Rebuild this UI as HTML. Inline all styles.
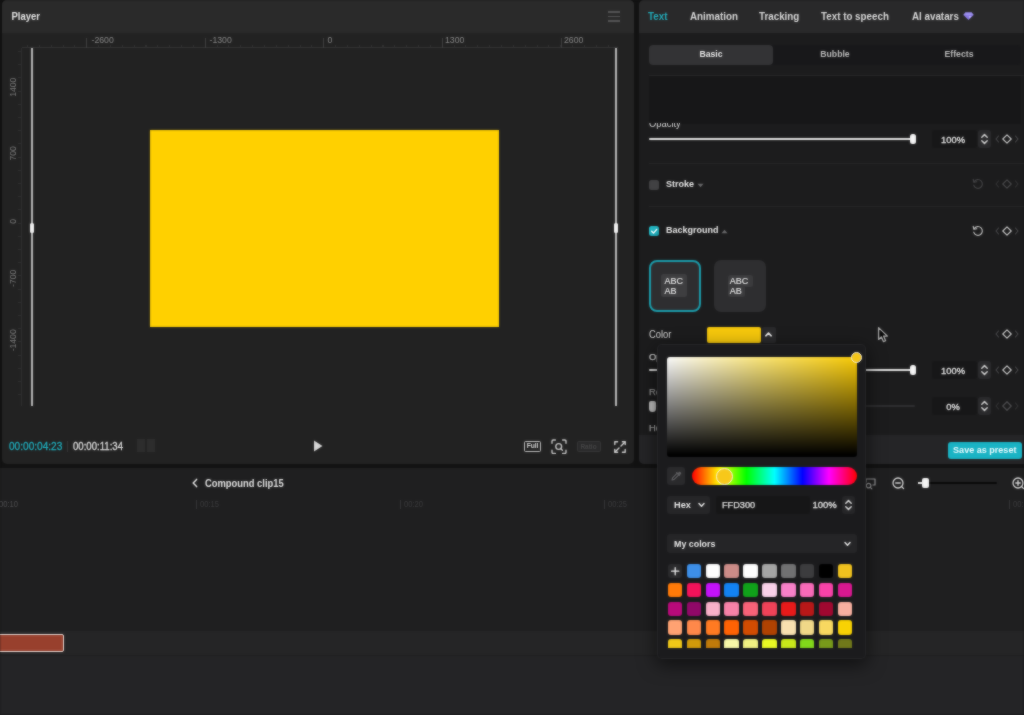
<!DOCTYPE html>
<html>
<head>
<meta charset="utf-8">
<title>Player</title>
<style>
*{box-sizing:border-box;margin:0;padding:0}
html{width:1024px;height:715px;overflow:hidden;background:#121212}
body{width:1024px;height:715px;background:#121212}
body{position:relative;font-family:"Liberation Sans",sans-serif;color:#e6e6e6;font-size:10px;filter:url(#soft)}
.abs{position:absolute}
.t{position:absolute;white-space:nowrap;line-height:1;transform:scaleY(1.1);transform-origin:50% 50%}
/* ---------- player ---------- */
#player{left:1.5px;top:0;width:632px;height:464px;background:#222222;border-radius:5px 5px 5px 5px;overflow:hidden}
#phead{left:0;top:0;width:632px;height:32.5px;background:#2a2a2a}
.rl{color:#8a8a8a;font-size:8.7px}
.vl{color:#7d7d7d;font-size:8.6px;transform:rotate(-90deg) scaleY(1.1);transform-origin:center center;width:40px;text-align:center}
/* ---------- right panel ---------- */
#right{left:639px;top:0;width:385px;height:464px;background:#1c1c1d;border-radius:5px 0 0 5px;overflow:hidden}
.tab{font-size:9.8px;font-weight:bold;color:#dcdcdc;top:12px}
.lab{font-size:9.4px;color:#d8d8d8}
.numbox{background:#171718;border-radius:3px;height:18px;width:45px;padding-right:3px;color:#e6e6e6;font-size:9.4px;text-align:center;line-height:19px;-webkit-text-stroke:.3px #e6e6e6}
.numbox span{display:inline-block}
.divider{height:1px;background:#262627;left:10px;width:375px}
/* ---------- timeline ---------- */
#timeline{left:0;top:468px;width:1024px;height:247px;background:#1f1f20}
/* ---------- picker ---------- */
#picker{left:658px;top:345px;width:207px;border-left:1px solid #1b1b1d;height:312.5px;background:#1b1b1d;border-radius:4px;box-shadow:0 0 0 1px #252527,0 5px 18px 2px rgba(0,0,0,.55)}
.sw{position:absolute;width:14.4px;height:14.4px;border-radius:3px}
</style>
</head>
<body>
<svg width="0" height="0" style="position:absolute"><defs><filter id="soft" x="-2%" y="-2%" width="104%" height="104%" color-interpolation-filters="sRGB"><feGaussianBlur in="SourceGraphic" stdDeviation="1" result="b"/><feComposite in="b" in2="SourceGraphic" operator="arithmetic" k1="0" k2="0.55" k3="0.45" k4="0"/></filter></defs></svg>
<!-- off-screen fillers so the soft filter has colour to sample beyond the edges -->
<div class="abs" style="left:-10px;top:-10px;width:1044px;height:10px;background:#29292a"></div>
<div class="abs" style="left:-10px;top:0;width:10px;height:468px;background:#121212"></div>
<div class="abs" style="left:1024px;top:0;width:10px;height:33px;background:#29292a"></div>
<div class="abs" style="left:1024px;top:33px;width:10px;height:403px;background:#1c1c1d"></div>
<div class="abs" style="left:1024px;top:436px;width:10px;height:28px;background:#252527"></div>
<div class="abs" style="left:-10px;top:468px;width:1044px;height:163px;background:#1f1f20"></div>
<div class="abs" style="left:-10px;top:631px;width:1044px;height:24px;background:#252526"></div>
<div class="abs" style="left:-10px;top:655px;width:1044px;height:70px;background:#242426"></div>

<!-- ================= PLAYER ================= -->
<div id="player" class="abs">
  <div id="phead" class="abs"></div>
  <div class="t" style="left:10px;top:12px;font-size:9.5px;font-weight:bold;color:#e9e9e9">Player</div>
  <!-- hamburger -->
  <div class="abs" style="left:606.5px;top:11px;width:11.5px;height:1.5px;background:#555556"></div>
  <div class="abs" style="left:606.5px;top:15.5px;width:11.5px;height:1.5px;background:#555556"></div>
  <div class="abs" style="left:606.5px;top:20px;width:11.5px;height:1.5px;background:#555556"></div>

  <!-- top ruler -->
  <div class="abs" style="left:20px;top:47px;width:596px;height:1px;background:#333334"></div>
  <div class="abs" style="left:25.2px;top:44.5px;width:590px;height:3px;background:repeating-linear-gradient(to right,#313132 0,#313132 1px,transparent 1px,transparent 11.85px)"></div>
  <div class="abs" style="left:84px;top:38px;width:1px;height:10px;background:#3f3f40"></div>
  <div class="abs" style="left:203px;top:38px;width:1px;height:10px;background:#3f3f40"></div>
  <div class="abs" style="left:321px;top:38px;width:1px;height:10px;background:#3f3f40"></div>
  <div class="abs" style="left:440px;top:38px;width:1px;height:10px;background:#3f3f40"></div>
  <div class="abs" style="left:559px;top:38px;width:1px;height:10px;background:#3f3f40"></div>
  <div class="t rl" style="left:90px;top:35.5px">-2600</div>
  <div class="t rl" style="left:208px;top:35.5px">-1300</div>
  <div class="t rl" style="left:326px;top:35.5px">0</div>
  <div class="t rl" style="left:443.5px;top:35.5px">1300</div>
  <div class="t rl" style="left:562.5px;top:35.5px">2600</div>

  <!-- left ruler -->
  <div class="abs" style="left:19.5px;top:48px;width:1px;height:358px;background:#2e2e2f"></div>
  <div class="abs" style="left:16.5px;top:51.4px;width:3px;height:354px;background:repeating-linear-gradient(to bottom,#2f2f30 0,#2f2f30 1px,transparent 1px,transparent 13.2px)"></div>
  <div class="t vl" style="left:-9px;top:83px">1400</div>
  <div class="t vl" style="left:-9px;top:149px">700</div>
  <div class="t vl" style="left:-9px;top:217px">0</div>
  <div class="t vl" style="left:-9px;top:274px">-700</div>
  <div class="t vl" style="left:-9px;top:336px">-1400</div>

  <!-- guide lines -->
  <div class="abs" style="left:29.5px;top:48px;width:1.5px;height:358px;background:#b9b9b9"></div>
  <div class="abs" style="left:28px;top:223px;width:4px;height:10px;border-radius:1.5px;background:#f2f2f2"></div>
  <div class="abs" style="left:613.5px;top:48px;width:1.5px;height:358px;background:#b9b9b9"></div>
  <div class="abs" style="left:612px;top:223px;width:4px;height:10px;border-radius:1.5px;background:#f2f2f2"></div>

  <!-- yellow canvas -->
  <div class="abs" style="left:148px;top:129.5px;width:349px;height:197px;background:#ffd000"></div>

  <!-- controls -->
  <div class="t" style="left:7.5px;top:442px;font-size:10.1px;-webkit-text-stroke:.25px #1fb4c4;color:#1fb4c4">00:00:04:23</div>
  <div class="t" style="left:71.5px;top:442px;font-size:9.6px;-webkit-text-stroke:.25px #e2e2e2;color:#e2e2e2">00:00:11:34</div>
  <div class="abs" style="left:65.5px;top:441px;width:1px;height:11px;background:#353536"></div>
  <div class="abs" style="left:135px;top:439px;width:8px;height:13px;background:#2d2d2d"></div>
  <div class="abs" style="left:145px;top:439px;width:8px;height:13px;background:#2d2d2d"></div>
  <svg class="abs" style="left:311px;top:440px" width="10" height="12" viewBox="0 0 10 12"><path d="M1 0.5 L9.5 6 L1 11.5 Z" fill="#d6d6d6"/></svg>
  <!-- right controls -->
  <div class="abs" style="left:522.5px;top:441px;width:17px;height:11px;border:1.2px solid #c4c4c4;border-radius:1.5px"></div>
  <div class="t" style="left:522.5px;top:443px;width:17px;text-align:center;font-size:6.8px;font-weight:bold;color:#d4d4d4;letter-spacing:-0.1px">Full</div>
  <svg class="abs" style="left:549px;top:438.5px" width="16" height="15.5" viewBox="0 0 16 15.5"><path d="M1 4.2 V2.2 A1.2 1.2 0 0 1 2.2 1 H4.4 M11.6 1 H13.8 A1.2 1.2 0 0 1 15 2.2 V4.2 M15 11.3 V13.3 A1.2 1.2 0 0 1 13.8 14.5 H11.6 M4.4 14.5 H2.2 A1.2 1.2 0 0 1 1 13.3 V11.3" fill="none" stroke="#c8c8c8" stroke-width="1.4" stroke-linecap="round"/><circle cx="7.7" cy="7.5" r="2.9" fill="none" stroke="#c8c8c8" stroke-width="1.4"/><path d="M9.9 9.7 L11.4 11.2" stroke="#c8c8c8" stroke-width="1.4" stroke-linecap="round"/></svg>
  <div class="abs" style="left:575px;top:441px;width:24px;height:11px;border:1px solid #363637;border-radius:1.5px;background:#2a2a2b"></div>
  <div class="t" style="left:575px;top:443.5px;width:24px;text-align:center;font-size:6.5px;font-weight:bold;color:#454546">Ratio</div>
  <svg class="abs" style="left:612.5px;top:440.5px" width="12" height="12" viewBox="0 0 12 12"><path d="M0.8 3.6 V0.8 H3.6 M8.4 0.8 H11.2 V3.6 M11.2 8.4 V11.2 H8.4 M3.6 11.2 H0.8 V8.4" fill="none" stroke="#cfcfcf" stroke-width="1.4" stroke-linecap="round" stroke-linejoin="round"/><path d="M7 5 L11 1 M5 7 L1 11" stroke="#cfcfcf" stroke-width="1.4" stroke-linecap="round"/></svg>
</div>

<!-- ================= RIGHT PANEL ================= -->
<div id="right" class="abs">
  <div class="abs" style="left:0;top:0;width:385px;height:32.5px;background:#29292a"></div>
  <div class="t tab" style="left:9px;color:#22afbd">Text</div>
  <div class="t tab" style="left:51px">Animation</div>
  <div class="t tab" style="left:120px">Tracking</div>
  <div class="t tab" style="left:182px">Text to speech</div>
  <div class="t tab" style="left:273px">AI avatars</div>
  <svg class="abs" style="left:323.5px;top:12px" width="11" height="8.5" viewBox="0 0 11 8.5"><path d="M2.4 0.4 H8.6 L10.6 3 L5.5 8.1 L0.4 3 Z" fill="#8a7ae6"/><path d="M2.4 0.4 H8.6 L10.6 3 H0.4 Z" fill="#9d90f0"/><path d="M6.2 4.2 L8.4 4.2 L6.4 6.2 Z" fill="#d9d4fb"/></svg>

  <!-- sub tabs -->
  <div class="abs" style="left:10px;top:44.5px;width:372px;height:20px;border-radius:4px;background:#18181a"></div>
  <div class="abs" style="left:10px;top:45px;width:124px;height:19.5px;border-radius:4px;background:#333335"></div>
  <div class="t" style="left:10px;top:49.5px;width:124px;text-align:center;font-size:8.7px;font-weight:bold;color:#ececec">Basic</div>
  <div class="t" style="left:134px;top:49.5px;width:124px;text-align:center;font-size:8.7px;font-weight:bold;color:#bdbdbd">Bubble</div>
  <div class="t" style="left:258px;top:49.5px;width:124px;text-align:center;font-size:8.7px;font-weight:bold;color:#bdbdbd">Effects</div>
  <div class="abs divider" style="top:75px"></div>
  <div class="abs" style="left:10px;top:76px;width:372px;height:47.5px;background:#171718"></div>

  <!-- opacity (top) -->
  <div class="abs" style="left:10px;top:123px;width:60px;height:6px;overflow:hidden"><div class="t lab" style="left:0;top:-4px">Opacity</div></div>
  <div class="abs" style="left:10px;top:138px;width:262px;height:2px;border-radius:1px;background:#e4e4e4"></div>
  <div class="abs" style="left:271px;top:134px;width:6.2px;height:10.2px;border-radius:2.5px;background:#f4f4f4"></div>
  <div class="abs numbox" style="left:293px;top:130px"><span>100%</span></div>
  <div class="abs" style="left:339px;top:130px;width:13px;height:18px;border-radius:3px;background:#2a2a2c"></div>
  <svg class="abs" style="left:339px;top:130px" width="13" height="18" viewBox="0 0 13 18"><path d="M3.8 7.2 L6.5 4.6 L9.2 7.2 M3.8 10.8 L6.5 13.4 L9.2 10.8" fill="none" stroke="#d0d0d0" stroke-width="1.5" stroke-linecap="round" stroke-linejoin="round"/></svg>
  <svg class="abs" style="left:355px;top:133px" width="26" height="12" viewBox="0 0 26 12"><path d="M4.5 3 L2 6 L4.5 9 M21.5 3 L24 6 L21.5 9" fill="none" stroke="#4a4a4c" stroke-width="1.1" stroke-linecap="round" stroke-linejoin="round"/><path d="M13 1.8 L17.2 6 L13 10.2 L8.8 6 Z" fill="none" stroke="#c6c6c6" stroke-width="1.2" stroke-linejoin="round"/></svg>
  <div class="abs divider" style="top:162.6px"></div>

  <!-- stroke -->
  <div class="abs" style="left:10px;top:179.7px;width:10px;height:10px;border-radius:2.5px;background:#414143"></div>
  <div class="t" style="left:27px;top:180px;font-size:9px;font-weight:bold;color:#e8e8e8">Stroke</div>
  <svg class="abs" style="left:58px;top:182.5px" width="7" height="5" viewBox="0 0 7 5"><path d="M0.5 0.8 L6.5 0.8 L3.5 4.2 Z" fill="#6a6a6c"/></svg>
  <svg class="abs" style="left:333px;top:178px" width="12" height="12" viewBox="0 0 12 12"><path d="M2.2 3.6 A4.4 4.4 0 1 1 1.7 7.2" fill="none" stroke="#444446" stroke-width="1.15" stroke-linecap="round"/><path d="M1.2 1.4 L1.9 4.3 L4.8 3.8" fill="none" stroke="#444446" stroke-width="1.15" stroke-linecap="round" stroke-linejoin="round"/></svg>
  <svg class="abs" style="left:355px;top:178px" width="26" height="12" viewBox="0 0 26 12"><path d="M4.5 3 L2 6 L4.5 9 M21.5 3 L24 6 L21.5 9" fill="none" stroke="#353537" stroke-width="1.1" stroke-linecap="round" stroke-linejoin="round"/><path d="M13 1.8 L17.2 6 L13 10.2 L8.8 6 Z" fill="none" stroke="#48484a" stroke-width="1.2" stroke-linejoin="round"/></svg>
  <div class="abs divider" style="top:206px"></div>

  <!-- background -->
  <div class="abs" style="left:10px;top:226px;width:10.3px;height:10.3px;border-radius:2.5px;background:linear-gradient(135deg,#25c0cc,#179aa9)"></div>
  <svg class="abs" style="left:10px;top:226px" width="10.3" height="10.3" viewBox="0 0 10 10"><path d="M2.6 5.1 L4.4 6.9 L7.5 3.3" fill="none" stroke="#fff" stroke-width="1.4" stroke-linecap="round" stroke-linejoin="round"/></svg>
  <div class="t" style="left:27px;top:226px;font-size:9px;font-weight:bold;color:#e8e8e8">Background</div>
  <svg class="abs" style="left:81.5px;top:228.5px" width="7" height="5" viewBox="0 0 7 5"><path d="M0.5 4.2 L6.5 4.2 L3.5 0.8 Z" fill="#6a6a6c"/></svg>
  <svg class="abs" style="left:333px;top:225px" width="12" height="12" viewBox="0 0 12 12"><path d="M2.2 3.6 A4.4 4.4 0 1 1 1.7 7.2" fill="none" stroke="#c2c2c2" stroke-width="1.15" stroke-linecap="round"/><path d="M1.2 1.4 L1.9 4.3 L4.8 3.8" fill="none" stroke="#c2c2c2" stroke-width="1.15" stroke-linecap="round" stroke-linejoin="round"/></svg>
  <svg class="abs" style="left:355px;top:225px" width="26" height="12" viewBox="0 0 26 12"><path d="M4.5 3 L2 6 L4.5 9 M21.5 3 L24 6 L21.5 9" fill="none" stroke="#4a4a4c" stroke-width="1.1" stroke-linecap="round" stroke-linejoin="round"/><path d="M13 1.8 L17.2 6 L13 10.2 L8.8 6 Z" fill="none" stroke="#c6c6c6" stroke-width="1.2" stroke-linejoin="round"/></svg>

  <!-- style boxes -->
  <div class="abs" style="left:9.5px;top:259.5px;width:52.5px;height:52px;border-radius:8px;background:#2e2e30;border:2.2px solid #1b9dac"></div>
  <div class="abs" style="left:22px;top:274px;width:26px;height:23.3px;border-radius:2.5px;background:#3e3e40"></div>
  <div class="t" style="left:25.5px;top:276.2px;font-size:9px;line-height:10.3px;color:#ededed;transform:none;-webkit-text-stroke:.12px #ededed">ABC<br>AB</div>
  <div class="abs" style="left:74.8px;top:259.5px;width:52px;height:52px;border-radius:7px;background:#2e2e30"></div>
  <div class="abs" style="left:88.5px;top:274.5px;width:25.3px;height:12px;border-radius:2.5px 2.5px 2.5px 0;background:#3b3b3d"></div>
  <div class="abs" style="left:88.5px;top:286px;width:17.8px;height:11.3px;border-radius:0 0 2.5px 2.5px;background:#3b3b3d"></div>
  <div class="t" style="left:90.8px;top:276.2px;font-size:9px;line-height:10.3px;color:#ededed;transform:none;-webkit-text-stroke:.12px #ededed">ABC<br>AB</div>

  <!-- color row -->
  <div class="t lab" style="left:10px;top:330px">Color</div>
  <div class="abs" style="left:68px;top:327px;width:54px;height:15.5px;border-radius:2px;background:#f5c70c"></div>
  <div class="abs" style="left:123px;top:327px;width:14px;height:15.5px;border-radius:2px;background:#2a2a2c"></div>
  <svg class="abs" style="left:123px;top:327px" width="13" height="15" viewBox="0 0 13 15"><path d="M3.8 8.8 L6.5 6.2 L9.2 8.8" fill="none" stroke="#f0f0f0" stroke-width="1.6" stroke-linecap="round" stroke-linejoin="round"/></svg>
  <svg class="abs" style="left:355px;top:328px" width="26" height="12" viewBox="0 0 26 12"><path d="M4.5 3 L2 6 L4.5 9 M21.5 3 L24 6 L21.5 9" fill="none" stroke="#4a4a4c" stroke-width="1.1" stroke-linecap="round" stroke-linejoin="round"/><path d="M13 1.8 L17.2 6 L13 10.2 L8.8 6 Z" fill="none" stroke="#c6c6c6" stroke-width="1.2" stroke-linejoin="round"/></svg>

  <!-- opacity (bg) -->
  <div class="t lab" style="left:10px;top:351.5px;transform:none;-webkit-text-stroke:.25px #d8d8d8">Opacity</div>
  <div class="abs" style="left:10px;top:369px;width:262px;height:2px;border-radius:1px;background:#e4e4e4"></div>
  <div class="abs" style="left:271px;top:365px;width:6.2px;height:10.2px;border-radius:2.5px;background:#f4f4f4"></div>
  <div class="abs numbox" style="left:293px;top:361px"><span>100%</span></div>
  <div class="abs" style="left:339px;top:361px;width:13px;height:18px;border-radius:3px;background:#2a2a2c"></div>
  <svg class="abs" style="left:339px;top:361px" width="13" height="18" viewBox="0 0 13 18"><path d="M3.8 7.2 L6.5 4.6 L9.2 7.2 M3.8 10.8 L6.5 13.4 L9.2 10.8" fill="none" stroke="#d0d0d0" stroke-width="1.5" stroke-linecap="round" stroke-linejoin="round"/></svg>
  <svg class="abs" style="left:355px;top:364px" width="26" height="12" viewBox="0 0 26 12"><path d="M4.5 3 L2 6 L4.5 9 M21.5 3 L24 6 L21.5 9" fill="none" stroke="#4a4a4c" stroke-width="1.1" stroke-linecap="round" stroke-linejoin="round"/><path d="M13 1.8 L17.2 6 L13 10.2 L8.8 6 Z" fill="none" stroke="#c6c6c6" stroke-width="1.2" stroke-linejoin="round"/></svg>

  <!-- round corner -->
  <div class="t lab" style="left:10px;top:387px;color:#969696;transform:none;-webkit-text-stroke:.25px #969696">Round</div>
  <div class="abs" style="left:10px;top:405px;width:266px;height:2px;border-radius:1px;background:#2e2e30"></div>
  <div class="abs" style="left:10px;top:401px;width:7px;height:10.5px;border-radius:2px 2px 3.5px 3.5px;background:#c2c2c2"></div>
  <div class="abs numbox" style="left:293px;top:397px"><span>0%</span></div>
  <div class="abs" style="left:339px;top:397px;width:13px;height:18px;border-radius:3px;background:#2a2a2c"></div>
  <svg class="abs" style="left:339px;top:397px" width="13" height="18" viewBox="0 0 13 18"><path d="M3.8 7.2 L6.5 4.6 L9.2 7.2 M3.8 10.8 L6.5 13.4 L9.2 10.8" fill="none" stroke="#d0d0d0" stroke-width="1.5" stroke-linecap="round" stroke-linejoin="round"/></svg>
  <svg class="abs" style="left:355px;top:400px" width="26" height="12" viewBox="0 0 26 12"><path d="M4.5 3 L2 6 L4.5 9 M21.5 3 L24 6 L21.5 9" fill="none" stroke="#353537" stroke-width="1.1" stroke-linecap="round" stroke-linejoin="round"/><path d="M13 1.8 L17.2 6 L13 10.2 L8.8 6 Z" fill="none" stroke="#4c4c4e" stroke-width="1.3" stroke-linejoin="round"/></svg>

  <div class="t lab" style="left:10px;top:423px;color:#a8a8a8;transform:none;-webkit-text-stroke:.25px #a8a8a8">Height</div>

  <!-- footer -->
  <div class="abs" style="left:0;top:435px;width:385px;height:29px;background:#252527"></div>
  <div class="abs" style="left:309px;top:441.5px;width:73.5px;height:17px;border-radius:3px;background:#19b3c4"></div>
  <div class="t" style="left:309px;top:445.5px;width:73.5px;text-align:center;font-size:9.05px;font-weight:bold;color:#eefcff">Save as preset</div>
</div>

<!-- ================= TIMELINE ================= -->
<div id="timeline" class="abs">
  <!-- header -->
  <svg class="abs" style="left:191.2px;top:10px" width="8" height="10" viewBox="0 0 8 10"><path d="M5.6 1.4 L2.2 5 L5.6 8.6" fill="none" stroke="#e6e6e6" stroke-width="1.5" stroke-linecap="round" stroke-linejoin="round"/></svg>
  <div class="t" style="left:205px;top:10.5px;font-size:9.4px;font-weight:bold;color:#e4e4e4">Compound clip15</div>

  <!-- right tools -->
  <svg class="abs" style="left:864px;top:9px" width="13" height="13" viewBox="0 0 13 13"><path d="M2 5.5 V2 H11 V8 H8.5" fill="none" stroke="#9c9c9e" stroke-width="1.2" stroke-linejoin="round"/><circle cx="4.6" cy="8.6" r="2.3" fill="none" stroke="#9c9c9e" stroke-width="1.2"/><path d="M6.3 10.3 L7.8 11.8" stroke="#9c9c9e" stroke-width="1.2" stroke-linecap="round"/></svg>
  <svg class="abs" style="left:891px;top:8px" width="15" height="15" viewBox="0 0 15 15"><circle cx="7" cy="7" r="5" fill="none" stroke="#d6d6d6" stroke-width="1.3"/><path d="M4.8 7 H9.2" stroke="#d6d6d6" stroke-width="1.4" stroke-linecap="round"/><path d="M10.8 10.8 L12.6 12.6" stroke="#d6d6d6" stroke-width="1.3" stroke-linecap="round"/></svg>
  <div class="abs" style="left:918px;top:14px;width:79px;height:2px;border-radius:1px;background:#080808"></div>
  <div class="abs" style="left:918px;top:14px;width:6px;height:2px;background:#e6e6e6"></div>
  <div class="abs" style="left:922px;top:10px;width:6.5px;height:10px;border-radius:2px;background:#f4f4f4"></div>
  <svg class="abs" style="left:1011px;top:8px" width="15" height="15" viewBox="0 0 15 15"><circle cx="7" cy="7" r="5" fill="none" stroke="#d6d6d6" stroke-width="1.3"/><path d="M4.8 7 H9.2 M7 4.8 V9.2" stroke="#d6d6d6" stroke-width="1.4" stroke-linecap="round"/><path d="M10.8 10.8 L12.6 12.6" stroke="#d6d6d6" stroke-width="1.3" stroke-linecap="round"/></svg>

  <!-- ruler -->
  <div class="t" style="left:-1px;top:33px;font-size:7.6px;color:#505052">00:10</div>
  <div class="abs" style="left:196px;top:32px;width:1px;height:9px;background:#353537"></div>
  <div class="t" style="left:200px;top:33px;font-size:7.6px;color:#3c3c3e">00:15</div>
  <div class="abs" style="left:400px;top:32px;width:1px;height:9px;background:#353537"></div>
  <div class="t" style="left:404px;top:33px;font-size:7.6px;color:#3c3c3e">00:20</div>
  <div class="abs" style="left:604px;top:32px;width:1px;height:9px;background:#353537"></div>
  <div class="t" style="left:608px;top:33px;font-size:7.6px;color:#3c3c3e">00:25</div>
  <div class="abs" style="left:1009px;top:32px;width:1px;height:9px;background:#353537"></div>
  <div class="t" style="left:1013px;top:33px;font-size:7.6px;color:#3c3c3e">00:30</div>

  <!-- tracks -->
  <div class="abs" style="left:0;top:163px;width:1024px;height:24px;background:#252526"></div>
  <div class="abs" style="left:0;top:187.5px;width:1024px;height:60px;background:#242426"></div>
  <div class="abs" style="left:-3px;top:166px;width:67px;height:18px;border-radius:2px;background:#98402d;border:1.2px solid #ecdcd6"></div>
</div>

<!-- ================= COLOR PICKER ================= -->
<div id="picker" class="abs">
  <!-- SV square -->
  <div class="abs" style="left:8px;top:12px;width:190px;height:100px;border-radius:3px;background:linear-gradient(to top,#000 2%,rgba(0,0,0,.86) 16%,rgba(0,0,0,0) 100%),linear-gradient(to right,#fafafa 0%,#f9e375 50%,#f7c906 100%)"></div>
  <div class="abs" style="left:191.5px;top:6.5px;width:11px;height:11px;border-radius:50%;background:#f5c518;border:1.2px solid #f4f0e0"></div>
  <!-- eyedropper -->
  <div class="abs" style="left:8px;top:122px;width:18px;height:18px;border-radius:3px;background:#2a2a2c"></div>
  <svg class="abs" style="left:8px;top:122px" width="18" height="18" viewBox="0 0 18 18"><path d="M5 13 L5.6 10.8 L10.2 6.2 L11.8 7.8 L7.2 12.4 Z" fill="none" stroke="#5e5e61" stroke-width="1.1" stroke-linejoin="round"/><path d="M9.6 5.6 L12.4 8.4 M10.9 6.9 L12.4 5.4 A1.1 1.1 0 0 1 13.6 6.6 L12.1 8.1" fill="#5e5e61" stroke="#5e5e61" stroke-width="1.2" stroke-linecap="round"/></svg>
  <!-- hue -->
  <div class="abs" style="left:33px;top:122px;width:165px;height:18px;border-radius:9px;background:linear-gradient(to right,#ff0000 0%,#ffff00 17%,#00ff00 33%,#00ffff 50%,#0000ff 67%,#ff00ff 83%,#ff0000 100%)"></div>
  <div class="abs" style="left:57px;top:122.5px;width:17px;height:17px;border-radius:50%;background:#f7c81a;border:1.3px solid #f6f2e2"></div>
  <!-- hex row -->
  <div class="abs" style="left:8px;top:151px;width:43px;height:18px;border-radius:3px;background:#262628"></div>
  <div class="t" style="left:15px;top:156px;font-size:9.2px;font-weight:bold;color:#ececec;transform:none">Hex</div>
  <svg class="abs" style="left:38px;top:156px" width="9" height="8" viewBox="0 0 9 8"><path d="M2 2.6 L4.5 5.2 L7 2.6" fill="none" stroke="#e8e8e8" stroke-width="1.5" stroke-linecap="round" stroke-linejoin="round"/></svg>
  <div class="abs" style="left:57px;top:151px;width:94px;height:18px;border-radius:3px;background:#161617"></div>
  <div class="t" style="left:63px;top:156px;font-size:9.2px;color:#e6e6e6;transform:none;-webkit-text-stroke:.25px #e6e6e6">FFD300</div>
  <div class="t" style="left:153.5px;top:155px;font-size:9.5px;color:#e6e6e6;transform:none;-webkit-text-stroke:.3px #e6e6e6">100%</div>
  <div class="abs" style="left:183px;top:151px;width:13px;height:18px;border-radius:3px;background:#262628"></div>
  <svg class="abs" style="left:183px;top:151px" width="13" height="18" viewBox="0 0 13 18"><path d="M3.8 7.2 L6.5 4.6 L9.2 7.2 M3.8 10.8 L6.5 13.4 L9.2 10.8" fill="none" stroke="#d8d8d8" stroke-width="1.5" stroke-linecap="round" stroke-linejoin="round"/></svg>
  <!-- my colors -->
  <div class="abs" style="left:8px;top:189.4px;width:190px;height:18.6px;border-radius:3px;background:#252527"></div>
  <div class="t" style="left:15px;top:194.6px;font-size:8.9px;font-weight:bold;color:#ececec">My colors</div>
  <svg class="abs" style="left:184px;top:195.4px" width="9" height="8" viewBox="0 0 9 8"><path d="M2 2.6 L4.5 5.2 L7 2.6" fill="none" stroke="#e8e8e8" stroke-width="1.5" stroke-linecap="round" stroke-linejoin="round"/></svg>
  <!-- swatches -->
  <div class="abs" style="left:0;top:0;width:207px;height:302.5px;overflow:hidden">
    <div class="sw" style="left:8.6px;top:218.8px;background:#2a2a2c"></div><svg class="abs" style="left:8.6px;top:218.8px" width="14.4" height="14.4" viewBox="0 0 14.4 14.4"><path d="M7.2 3.6 V10.8 M3.6 7.2 H10.8" stroke="#f0f0f0" stroke-width="1.3" stroke-linecap="round"/></svg>
  <div class="sw" style="left:27.5px;top:218.8px;background:#3d8fe8"></div>
  <div class="sw" style="left:46.5px;top:218.8px;background:#fdfdfd"></div>
  <div class="sw" style="left:65.4px;top:218.8px;background:#cc8c88"></div>
  <div class="sw" style="left:84.3px;top:218.8px;background:#fdfdfd"></div>
  <div class="sw" style="left:103.2px;top:218.8px;background:#a4a4a4"></div>
  <div class="sw" style="left:122.2px;top:218.8px;background:#717172"></div>
  <div class="sw" style="left:141.1px;top:218.8px;background:#3c3c3e"></div>
  <div class="sw" style="left:160.0px;top:218.8px;background:#000000"></div>
  <div class="sw" style="left:179.0px;top:218.8px;background:#f0c21e"></div>
  <div class="sw" style="left:8.6px;top:237.8px;background:#ff7a08"></div>
  <div class="sw" style="left:27.5px;top:237.8px;background:#f2125a"></div>
  <div class="sw" style="left:46.5px;top:237.8px;background:#c412fa"></div>
  <div class="sw" style="left:65.4px;top:237.8px;background:#1282f2"></div>
  <div class="sw" style="left:84.3px;top:237.8px;background:#10a21a"></div>
  <div class="sw" style="left:103.2px;top:237.8px;background:#f8d0e8"></div>
  <div class="sw" style="left:122.2px;top:237.8px;background:#f880c8"></div>
  <div class="sw" style="left:141.1px;top:237.8px;background:#f86ab8"></div>
  <div class="sw" style="left:160.0px;top:237.8px;background:#f842a8"></div>
  <div class="sw" style="left:179.0px;top:237.8px;background:#d81890"></div>
  <div class="sw" style="left:8.6px;top:256.8px;background:#b80a7a"></div>
  <div class="sw" style="left:27.5px;top:256.8px;background:#900868"></div>
  <div class="sw" style="left:46.5px;top:256.8px;background:#f8b0c8"></div>
  <div class="sw" style="left:65.4px;top:256.8px;background:#f882a8"></div>
  <div class="sw" style="left:84.3px;top:256.8px;background:#f86278"></div>
  <div class="sw" style="left:103.2px;top:256.8px;background:#f04258"></div>
  <div class="sw" style="left:122.2px;top:256.8px;background:#e81a1a"></div>
  <div class="sw" style="left:141.1px;top:256.8px;background:#b81818"></div>
  <div class="sw" style="left:160.0px;top:256.8px;background:#a00830"></div>
  <div class="sw" style="left:179.0px;top:256.8px;background:#f8b0a0"></div>
  <div class="sw" style="left:8.6px;top:275.3px;background:#ffa272"></div>
  <div class="sw" style="left:27.5px;top:275.3px;background:#ff884a"></div>
  <div class="sw" style="left:46.5px;top:275.3px;background:#ff7a22"></div>
  <div class="sw" style="left:65.4px;top:275.3px;background:#ff6204"></div>
  <div class="sw" style="left:84.3px;top:275.3px;background:#d24c02"></div>
  <div class="sw" style="left:103.2px;top:275.3px;background:#b04202"></div>
  <div class="sw" style="left:122.2px;top:275.3px;background:#f8e0b0"></div>
  <div class="sw" style="left:141.1px;top:275.3px;background:#f0d888"></div>
  <div class="sw" style="left:160.0px;top:275.3px;background:#f8d860"></div>
  <div class="sw" style="left:179.0px;top:275.3px;background:#f8d204"></div>
  <div class="sw" style="left:8.6px;top:293.8px;background:#f0c818"></div>
  <div class="sw" style="left:27.5px;top:293.8px;background:#d09a0a"></div>
  <div class="sw" style="left:46.5px;top:293.8px;background:#c07a0a"></div>
  <div class="sw" style="left:65.4px;top:293.8px;background:#f8f8a8"></div>
  <div class="sw" style="left:84.3px;top:293.8px;background:#f0f082"></div>
  <div class="sw" style="left:103.2px;top:293.8px;background:#e8f824"></div>
  <div class="sw" style="left:122.2px;top:293.8px;background:#c8e81a"></div>
  <div class="sw" style="left:141.1px;top:293.8px;background:#82d81a"></div>
  <div class="sw" style="left:160.0px;top:293.8px;background:#789a1a"></div>
  <div class="sw" style="left:179.0px;top:293.8px;background:#70781a"></div>
  </div>
</div>

<!-- cursor -->
<svg class="abs" style="left:877px;top:325.5px" width="13" height="18" viewBox="0 0 13 18"><path d="M1.6 1.6 L1.6 13.4 L4.4 10.9 L6.4 15.6 L8.6 14.7 L6.6 10.1 L10.4 10.1 Z" fill="#050505" stroke="#a9a9a9" stroke-width="1.3" stroke-linejoin="round"/></svg>

</body>
</html>
